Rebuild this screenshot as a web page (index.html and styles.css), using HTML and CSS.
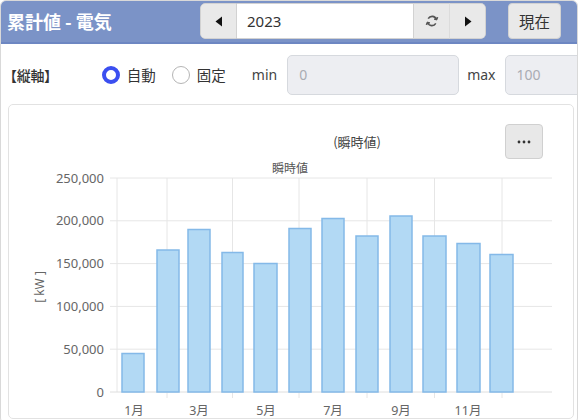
FILE: index.html
```html
<!DOCTYPE html>
<html lang="ja">
<head>
<meta charset="utf-8">
<title>累計値 - 電気</title>
<link rel="stylesheet" href="styles.css">
</head>
<body>
<div class="frame">
  <header class="topbar">
    <h1 class="title">累計値 - 電気</h1>
    <div class="yearnav">
      <button class="btn nav-btn prev" type="button" aria-label="前年">
        <svg width="8" height="11" viewBox="0 0 8 11"><path d="M7 0.5 L0.5 5.5 L7 10.5 Z" fill="#111"/></svg>
      </button>
      <div class="year">2023</div>
      <button class="btn nav-btn refresh" type="button" aria-label="更新">
        <svg width="14" height="14" viewBox="0 0 14 14" fill="none" stroke="#555" stroke-width="1.6">
          <path d="M3.2 4.6 A4.6 4.6 0 0 1 11.4 5.2"/>
          <path d="M10.8 9.4 A4.6 4.6 0 0 1 2.6 8.8"/>
          <path d="M12.6 3.2 L11.5 5.6 L9.1 4.9" stroke-linejoin="round"/>
          <path d="M1.4 10.8 L2.5 8.4 L4.9 9.1" stroke-linejoin="round"/>
        </svg>
      </button>
      <button class="btn nav-btn next" type="button" aria-label="次年">
        <svg width="8" height="11" viewBox="0 0 8 11"><path d="M1 0.5 L7.5 5.5 L1 10.5 Z" fill="#111"/></svg>
      </button>
    </div>
    <button class="btn now" type="button">現在</button>
  </header>

  <div class="axisrow">
    <span class="axis-label">【縦軸】</span>
    <label class="radio radio-auto"><span class="dot on"></span>自動</label>
    <label class="radio radio-fixed"><span class="dot"></span>固定</label>
    <span class="lbl lbl-min">min</span>
    <div class="field field-min">0</div>
    <span class="lbl lbl-max">max</span>
    <div class="field field-max">100</div>
  </div>

  <section class="card">
    <div class="card-head">
      <span class="chart-title">(瞬時値)</span>
      <button class="menu-btn" type="button" aria-label="メニュー">
        <svg width="14" height="4" viewBox="0 0 14 4"><circle cx="2" cy="2" r="1.4" fill="#333"/><circle cx="7" cy="2" r="1.4" fill="#333"/><circle cx="12" cy="2" r="1.4" fill="#333"/></svg>
      </button>
    </div>
    <svg class="chart" width="563" height="259" viewBox="9 157 563 259">
      <text class="subtitle" x="290" y="171" text-anchor="middle">瞬時値</text>
      <g class="grid">
        <line x1="110" y1="176" x2="552" y2="176"/>
        <line x1="110" y1="218.8" x2="552" y2="218.8"/>
        <line x1="110" y1="261.6" x2="552" y2="261.6"/>
        <line x1="110" y1="304.4" x2="552" y2="304.4"/>
        <line x1="110" y1="347.2" x2="552" y2="347.2"/>
        <line x1="117" y1="176" x2="117" y2="390"/>
        <line x1="167" y1="176" x2="167" y2="396"/>
        <line x1="232.5" y1="176" x2="232.5" y2="396"/>
        <line x1="299" y1="176" x2="299" y2="396"/>
        <line x1="367" y1="176" x2="367" y2="396"/>
        <line x1="434.5" y1="176" x2="434.5" y2="396"/>
        <line x1="502" y1="176" x2="502" y2="396"/>
      </g>
      <line class="base" x1="110" y1="390" x2="552" y2="390"/>
      <g class="ylabels" text-anchor="end">
        <text x="104" y="180.5">250,000</text>
        <text x="104" y="223.3">200,000</text>
        <text x="104" y="266.1">150,000</text>
        <text x="104" y="308.9">100,000</text>
        <text x="104" y="351.7">50,000</text>
        <text x="104" y="394.5">0</text>
      </g>
      <text class="ytitle" x="0" y="0" transform="translate(44 285) rotate(-90)" text-anchor="middle">[ kW ]</text>
      <g class="bars">
        <rect x="122" y="351.5" width="22" height="38.5"/>
        <rect x="157" y="248" width="22" height="142"/>
        <rect x="188" y="227.5" width="22" height="162.5"/>
        <rect x="222" y="250.5" width="21" height="139.5"/>
        <rect x="254" y="261.5" width="23" height="128.5"/>
        <rect x="289" y="226.5" width="22" height="163.5"/>
        <rect x="322" y="216.5" width="22" height="173.5"/>
        <rect x="356" y="234" width="22" height="156"/>
        <rect x="390" y="214" width="22" height="176"/>
        <rect x="423" y="234" width="23" height="156"/>
        <rect x="457" y="241.5" width="23" height="148.5"/>
        <rect x="490" y="252.5" width="23" height="137.5"/>
      </g>
      <g class="xlabels" text-anchor="middle">
        <text x="134" y="413">1月</text>
        <text x="199" y="413">3月</text>
        <text x="266" y="413">5月</text>
        <text x="333" y="413">7月</text>
        <text x="401" y="413">9月</text>
        <text x="468" y="413">11月</text>
      </g>
    </svg>
  </section>
</div>
</body>
</html>
```
FILE: styles.css
```css
* { box-sizing: border-box; }

html, body {
  margin: 0;
  padding: 0;
  background: #ffffff;
}

body {
  width: 580px;
  height: 420px;
  overflow: hidden;
  font-family: "Noto Sans", "Noto Sans CJK JP", sans-serif;
  color: #333;
}

.frame {
  width: 578px;
  height: 424px;
  border: 1px solid #d9d9d9;
  border-radius: 6px;
  overflow: hidden;
  background: #fff;
}

/* ---------- top bar ---------- */
.topbar {
  display: flex;
  align-items: flex-start;
  height: 43px;
  padding: 2px 0 0 6px;
  background: #7b93c7;
  border-bottom: 2px solid #6d87c2;
}

.title {
  flex: 0 0 193px;
  margin: 0;
  padding-top: 6px;
  font-family: "Noto Sans CJK JP", sans-serif;
  font-size: 18px;
  font-weight: 700;
  line-height: 24px;
  color: #ffffff;
  letter-spacing: 0;
  white-space: nowrap;
}

.yearnav {
  display: flex;
  flex-shrink: 0;
  height: 36px;
  border-radius: 5px;
  overflow: hidden;
}

.btn {
  margin: 0;
  padding: 0;
  border: 1px solid #d2d2d2;
  background: #e9e9e9;
  font: inherit;
  color: #333;
  display: flex;
  align-items: center;
  justify-content: center;
  flex-shrink: 0;
}

.nav-btn {
  width: 37px;
  height: 36px;
}

.prev { border-radius: 5px 0 0 5px; }
.next { border-radius: 0 5px 5px 0; width: 36px; border-left: none; }
.refresh { border-right-color: #dcdcdc; }

.year {
  width: 176px;
  height: 36px;
  padding-left: 10px;
  background: #ffffff;
  border-top: 1px solid #d2d2d2;
  border-bottom: 1px solid #d2d2d2;
  font-size: 15px;
  line-height: 34px;
  color: #333;
}

.now {
  margin-left: 22px;
  width: 53px;
  height: 36px;
  border-radius: 4px;
  font-family: "Noto Sans CJK JP", sans-serif;
  font-size: 15.5px;
  color: #333;
}

/* ---------- axis row ---------- */
.axisrow {
  display: flex;
  align-items: center;
  height: 58px;
  padding: 3px 0 0 0;
  font-family: "Noto Sans CJK JP", sans-serif;
  font-size: 14px;
  color: #333;
  white-space: nowrap;
}

.axisrow > * { flex-shrink: 0; }

.axis-label {
  margin-left: 2px;
  font-weight: 500;
  letter-spacing: -0.3px;
}

.radio {
  display: flex;
  align-items: center;
  gap: 7px;
  font-size: 14.5px;
}

.radio-auto { margin-left: 44px; }
.radio-fixed { margin-left: 16px; }

.dot {
  width: 18px;
  height: 18px;
  border-radius: 50%;
  border: 1.5px solid #b5b5b5;
  background: #fff;
}

.dot.on {
  border: 4.5px solid #3b4ff0;
}

.lbl {
  font-family: "Noto Sans", sans-serif;
  font-size: 14px;
  color: #444;
}

.lbl-min { margin-left: 26px; }
.lbl-max { margin-left: 8px; }

.field {
  height: 40px;
  padding-left: 11px;
  background: #edeef2;
  border: 1px solid #d6d9de;
  border-radius: 5px;
  font-family: "Noto Sans", sans-serif;
  font-size: 14px;
  line-height: 38px;
  color: #a9acb2;
}

.field-min { width: 172px; margin-left: 10px; }
.field-max { width: 90px; margin-left: 9px; }

/* ---------- chart card ---------- */
.card {
  margin: 2px 0 0 7px;
  width: 566px;
  height: 315px;
  border: 1px solid #e2e2e2;
  border-radius: 5px;
  background: #fff;
}

.card-head {
  display: flex;
  justify-content: flex-end;
  align-items: center;
  gap: 124px;
  height: 54px;
  padding: 19px 30px 0 0;
}

.chart-title {
  font-family: "Noto Sans CJK JP", sans-serif;
  font-size: 13px;
  color: #444;
}

.menu-btn {
  width: 38px;
  height: 35px;
  margin: 0;
  padding: 0;
  border: 1px solid #d0d0d0;
  border-radius: 4px;
  background: #e8e8e8;
  display: flex;
  align-items: center;
  justify-content: center;
}

.chart {
  display: block;
  overflow: visible;
  font-family: "Noto Sans", "Noto Sans CJK JP", sans-serif;
}

.subtitle {
  font-size: 12px;
  fill: #555;
  font-family: "Noto Sans CJK JP", sans-serif;
}

.grid line {
  stroke: #e6e6e6;
  stroke-width: 1;
}

.base {
  stroke: #dedede;
  stroke-width: 1;
}

.ylabels text {
  font-size: 13px;
  fill: #666;
}

.ytitle {
  font-size: 12px;
  fill: #666;
}

.bars rect {
  fill: #b2d9f4;
  stroke: #84b9e8;
  stroke-width: 1.5;
}

.xlabels text {
  font-size: 12.5px;
  fill: #666;
  font-family: "Noto Sans", "Noto Sans CJK JP", sans-serif;
}
```
